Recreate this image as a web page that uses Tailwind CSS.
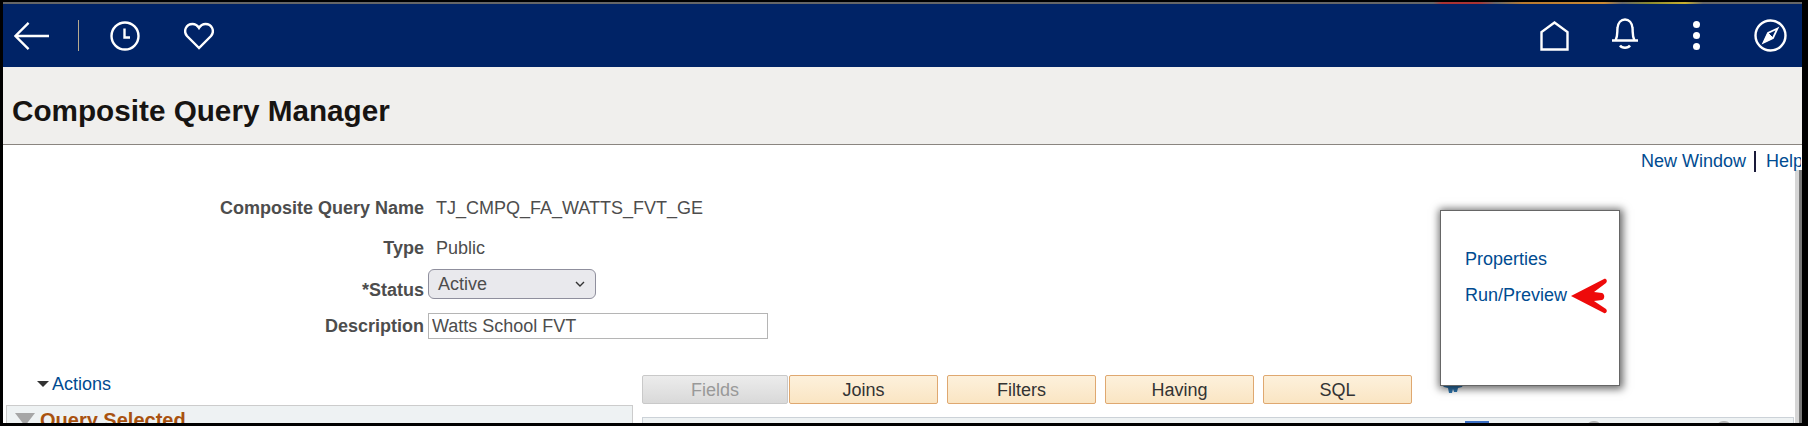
<!DOCTYPE html>
<html lang="en">
<head>
  <meta charset="UTF-8" />
  <title>Composite Query Manager</title>
  <script src="https://cdn.jsdelivr.net/npm/@tailwindcss/browser@4"></script>
</head>
<body class="bg-black font-['Liberation_Sans',Arial,sans-serif]">
  <div class="w-[1808px] h-[426px] overflow-hidden bg-black pl-[3px] pr-[6px] pb-[3px] flex flex-col">
    <!-- top edge -->
    <div class="h-[2px] shrink-0"></div>
    <div class="h-[2px] shrink-0 bg-[linear-gradient(90deg,#666_0%,#666_79.500%,#a33_80%,#a33_82%,#666_83%,#b87a30_84.500%,#c98a35_89%,#666_90%,#8a8a30_91.500%,#c8b030_93.500%,#666_94.500%)]"></div>

    <header class="h-[63px] shrink-0 bg-[#002366] flex items-center text-white">
      <a href="#" class="ml-[11px] w-[35px] flex">
        <svg width="36" height="30" viewBox="0 0 36 30" fill="none" stroke="currentColor" stroke-width="2.4"><path d="M1 15H36M15 1.5 1.5 15 15 28.5" /></svg>
      </a>
      <span class="ml-[29px] w-px h-[31px] bg-[#b5a98f]"></span>
      <a href="#" class="ml-[31px] flex">
        <svg width="30" height="30" viewBox="0 0 30 30" fill="none" stroke="currentColor" stroke-width="2.4"><circle cx="15" cy="15" r="13.5" /><path d="M14.5 7.5V16.5H20" /></svg>
      </a>
      <a href="#" class="ml-[44px] flex">
        <svg width="30" height="28" viewBox="0 0 30 28" fill="none" stroke="currentColor" stroke-width="2.4"><path d="M15 26 3 14C-1 9 2 2 8.500 2 11.500 2 13.500 3.500 15 6 16.500 3.500 18.500 2 21.500 2 28 2 31 9 27 14Z" /></svg>
      </a>
      <div class="ml-auto flex items-center">
        <a href="#" class="flex">
          <svg width="29" height="30" viewBox="0 0 29 30" fill="none" stroke="currentColor" stroke-width="2.4"><path d="M1.500 28.500V11L14.500 1.500 27.500 11V28.500Z" /></svg>
        </a>
        <a href="#" class="ml-[42px] -mt-[3px] flex">
          <svg width="28" height="32" viewBox="0 0 28 32" fill="none" stroke="currentColor" stroke-width="2.4"><path d="M1 22.500H27M4.500 22.500C7 18 6 14 6.500 10 7 5 10 1.500 14 1.500S21 5 21.500 10C22 14 21 18 23.500 22.500" /><path d="M9 27.500C11 30.500 17 30.500 19 27.500" /></svg>
        </a>
        <div class="ml-[54px] flex flex-col gap-[4px]">
          <span class="w-[7px] h-[7px] rounded-full bg-white"></span>
          <span class="w-[7px] h-[7px] rounded-full bg-white"></span>
          <span class="w-[7px] h-[7px] rounded-full bg-white"></span>
        </div>
        <a href="#" class="ml-[54px] mr-[15px] flex">
          <svg width="33" height="33" viewBox="0 0 33 33" fill="none" stroke="currentColor" stroke-width="2.4"><circle cx="16.500" cy="16.500" r="15" /><path d="M23.500 9.500 14 14 9.500 23.500 19 19Z" stroke-width="1.800" /><path d="M14 14 9.500 23.500 19 19Z" fill="currentColor" stroke-width="1" /></svg>
        </a>
      </div>
    </header>

    <div class="h-[78px] shrink-0 bg-[#f0efed] border-b border-[#8a8580] flex items-center pt-[11px]">
      <h1 class="ml-[9px] text-[29.700px] font-bold text-[#171412]">Composite Query Manager</h1>
    </div>

    <main class="relative flex-1 min-h-0 bg-white overflow-hidden">
      <!-- scrollbar sliver -->
      <div class="absolute right-0 top-[25px] bottom-0 w-[7px] bg-[linear-gradient(90deg,#d6d6d6_0,#d6d6d6_57%,#777_57%)]"></div>

      <div class="relative h-[32px] flex items-center justify-end pr-[1px] text-lg text-[#004b91]">
        <a href="#">New Window</a>
        <span class="ml-[8px] mr-[10px] w-[2px] h-[21px] bg-[#1a1a3a]"></span>
        <a href="#" class="w-[35px] overflow-hidden whitespace-nowrap">Help</a>
      </div>

      <div class="mt-[21px] flex items-center h-[20px] text-lg">
        <label class="w-[421px] text-right font-bold text-[#4d4d4d]">Composite Query Name</label>
        <span class="ml-[12px] text-[#4d4d4d]">TJ_CMPQ_FA_WATTS_FVT_GE</span>
      </div>
      <div class="mt-[20px] flex items-center h-[20px] text-lg">
        <label class="w-[421px] text-right font-bold text-[#4d4d4d]">Type</label>
        <span class="ml-[12px] text-[#4d4d4d]">Public</span>
      </div>
      <div class="mt-[11px] flex items-start h-[30px] text-lg">
        <label class="w-[421px] text-right font-bold text-[#4d4d4d] pt-[7px]">*Status</label>
        <div class="ml-[4px] w-[168px] h-[30px] border border-[#8f8f9d] rounded-[6px] bg-[#e9e9ed] flex items-center justify-between pl-[9px] pr-[10px] text-[#4d4d4d]">
          <span>Active</span>
          <svg width="10" height="6" viewBox="0 0 10 6" fill="none" stroke="#333" stroke-width="1.400"><path d="M1 1 5 5 9 1" /></svg>
        </div>
      </div>
      <div class="mt-[14px] flex items-center h-[26px] text-lg">
        <label class="w-[421px] text-right font-bold text-[#4d4d4d]">Description</label>
        <input class="ml-[4px] w-[340px] h-[26px] border border-[#b5b5b5] px-[3px] text-[#4d4d4d] outline-none" value="Watts School FVT" />
      </div>

      <div class="mt-[36px] flex">
        <div class="w-[639px] shrink-0">
          <a href="#" class="ml-[34px] -mt-[1px] h-[20px] flex items-center gap-[3px] text-lg text-[#004b91]">
            <span class="w-0 h-0 border-x-[6px] border-x-transparent border-t-[6px] border-t-[#333]"></span>
            Actions
          </a>
          <div class="mt-[11px] ml-[3px] w-[627px] h-[40px] bg-[#eef2f3] border border-[#ccc] flex items-start">
            <span class="ml-[8px] mt-[7px] w-0 h-0 border-x-[10px] border-x-transparent border-t-[13px] border-t-[#a6a6a6]"></span>
            <span class="ml-[5px] text-xl font-bold text-[#a9520f]">Query Selected</span>
          </div>
        </div>
        <div class="flex-1 min-w-0">
          <div class="flex text-lg">
            <button class="w-[146px] h-[29px] bg-[linear-gradient(#ececec,#d9d9d9)] border border-[#c9c9c9] rounded-[2px] text-[#999]">Fields</button>
            <button class="ml-[1px] w-[149px] h-[29px] bg-[linear-gradient(#fdf1dc,#fae5c3)] border border-[#dfa870] rounded-[2px] text-[#333]">Joins</button>
            <button class="ml-[9px] w-[149px] h-[29px] bg-[linear-gradient(#fdf1dc,#fae5c3)] border border-[#dfa870] rounded-[2px] text-[#333]">Filters</button>
            <button class="ml-[9px] w-[149px] h-[29px] bg-[linear-gradient(#fdf1dc,#fae5c3)] border border-[#dfa870] rounded-[2px] text-[#333]">Having</button>
            <button class="ml-[9px] w-[149px] h-[29px] bg-[linear-gradient(#fdf1dc,#fae5c3)] border border-[#dfa870] rounded-[2px] text-[#333]">SQL</button>
          </div>
          <div class="relative mt-[13px] w-[1152px] h-[40px] bg-[#eef2f3] border border-[#ccd2d8]">
            <span class="absolute left-[822px] top-[3px] w-[24px] h-[6px] bg-[#3b6fc4]"></span>
            <span class="absolute left-[944px] top-[3px] w-[14px] h-[6px] rounded-t-full bg-[#b5b5b5]"></span>
            <span class="absolute left-[1074px] top-[3px] w-[14px] h-[6px] rounded-t-full bg-[#b5b5b5]"></span>
          </div>
        </div>
      </div>

      <!-- gear peeking out from under the menu -->
      <svg class="absolute left-[1439px] top-[240px]" width="21" height="8" viewBox="0 0 21 8" fill="#2f77b0"><path d="M0 0H21L20 2 16 3 15 7H12L11 4 10 8H7L6 3 2 2Z" /></svg>

      <!-- popup menu -->
      <div class="absolute left-[1437px] top-[65px] w-[180px] h-[176px] bg-white border border-[#666] shadow-[1px_1px_8px_2px_rgba(0,0,0,0.6)] text-lg text-[#004b91]">
        <a href="#" class="absolute left-[24px] top-[38px] leading-5">Properties</a>
        <a href="#" class="absolute left-[24px] top-[74px] leading-5">Run/Preview</a>
        <svg class="absolute left-[130px] top-[67px]" width="37" height="36" viewBox="0 0 37 36" fill="#ee0a0a"><path d="M0 18 33 1C35 0 37 3 35 5L23 14 31 15C34 16 34 21 31 22L23 23 35 31C37 33 35 36 33 35Z" /></svg>
      </div>
    </main>
  </div>
</body>
</html>
